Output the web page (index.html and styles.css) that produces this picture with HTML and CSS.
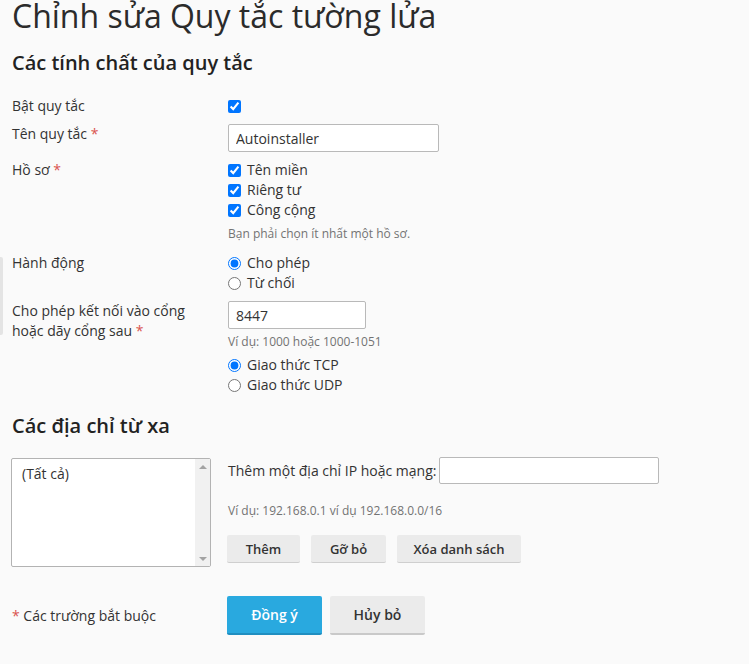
FILE: index.html
```html
<!DOCTYPE html>
<html lang="vi">
<head>
<meta charset="utf-8">
<title>Chỉnh sửa Quy tắc tường lửa</title>
<link rel="stylesheet" href="styles.css">
</head>
<body>
<div class="edge-strip"></div>
<div class="page">
  <h1 class="title">Chỉnh sửa Quy tắc tường lửa</h1>
  <h2 class="section-title first">Các tính chất của quy tắc</h2>

  <div class="row row-enable">
    <div class="label">Bật quy tắc</div>
    <div class="control"><label class="opt"><input type="checkbox" checked></label></div>
  </div>

  <div class="row row-name">
    <div class="label">Tên quy tắc <span class="req">*</span></div>
    <div class="control"><input class="text-input name-input" type="text" value="Autoinstaller"></div>
  </div>

  <div class="row row-profile">
    <div class="label">Hồ sơ <span class="req">*</span></div>
    <div class="control">
      <label class="opt"><input type="checkbox" checked><span>Tên miền</span></label>
      <label class="opt"><input type="checkbox" checked><span>Riêng tư</span></label>
      <label class="opt"><input type="checkbox" checked><span>Công cộng</span></label>
      <div class="hint hint-profile">Bạn phải chọn ít nhất một hồ sơ.</div>
    </div>
  </div>

  <div class="row row-action">
    <div class="label">Hành động</div>
    <div class="control">
      <label class="opt"><input type="radio" name="act" checked><span>Cho phép</span></label>
      <label class="opt"><input type="radio" name="act"><span>Từ chối</span></label>
    </div>
  </div>

  <div class="row row-port">
    <div class="label">Cho phép kết nối vào cổng<br>hoặc dãy cổng sau <span class="req">*</span></div>
    <div class="control">
      <input class="text-input port-input" type="text" value="8447">
      <div class="hint hint-port">Ví dụ: 1000 hoặc 1000-1051</div>
      <div class="proto">
        <label class="opt"><input type="radio" name="proto" checked><span>Giao thức TCP</span></label>
        <label class="opt"><input type="radio" name="proto"><span>Giao thức UDP</span></label>
      </div>
    </div>
  </div>

  <h2 class="section-title second">Các địa chỉ từ xa</h2>

  <div class="remote">
    <div class="listbox">
      <div class="list-items"><div class="list-item">(Tất cả)</div></div>
      <div class="scrollbar">
        <span class="arrow up"></span>
        <span class="arrow down"></span>
      </div>
    </div>
    <div class="remote-controls">
      <div class="ip-line">
        <span>Thêm một địa chỉ IP hoặc mạng:</span>
        <input class="text-input ip-input" type="text">
      </div>
      <div class="hint hint-ip">Ví dụ: 192.168.0.1 ví dụ 192.168.0.0/16</div>
      <div class="btn-row">
        <button class="btn btn-add">Thêm</button>
        <button class="btn btn-remove">Gỡ bỏ</button>
        <button class="btn btn-clear">Xóa danh sách</button>
      </div>
    </div>
  </div>

  <div class="footer">
    <div class="footer-note"><span class="req">*</span> Các trường bắt buộc</div>
    <div class="footer-buttons">
      <button class="btn-lg btn-primary">Đồng ý</button>
      <button class="btn-lg btn-cancel">Hủy bỏ</button>
    </div>
  </div>
</div>
</body>
</html>
```
FILE: styles.css
```css
html, body {
  margin: 0;
  padding: 0;
  background: #fafafa;
}
body {
  font-family: "Open Sans", "Noto Sans", sans-serif;
  font-size: 14px;
  line-height: 20px;
  color: #333;
  position: relative;
}
.edge-strip {
  position: absolute;
  left: 0;
  top: 257px;
  width: 3px;
  height: 78px;
  background: #e4e4e4;
  border-radius: 0 2px 2px 0;
}
.page {
  padding-left: 12px;
}
.title {
  margin: 0;
  font-size: 32px;
  line-height: 32px;
  font-weight: 400;
  color: #2b2b2b;
}
.section-title {
  margin: 0;
  font-size: 20px;
  line-height: 24px;
  font-weight: 600;
  color: #222;
}
.section-title.first {
  margin-top: 19px;
  margin-bottom: 21px;
}
.section-title.second {
  margin-top: 19px;
  margin-bottom: 20px;
}
.row {
  display: grid;
  grid-template-columns: 216px 1fr;
}
.row-enable { margin-bottom: 8px; }
.row-name { margin-bottom: 8px; }
.row-profile { margin-bottom: 11px; }
.row-action { margin-bottom: 8px; }
.control {
  display: flex;
  flex-direction: column;
  align-items: flex-start;
}
.req {
  color: #d9534f;
}
.opt {
  display: flex;
  align-items: center;
  height: 20px;
  gap: 6px;
}
.opt input {
  margin: 0;
  width: 13px;
  height: 13px;
}
.text-input {
  box-sizing: border-box;
  height: 28px;
  margin: 0;
  border: 1px solid #b9b9b9;
  border-radius: 2px;
  background: #fff;
  padding: 0 7px;
  font-family: "Open Sans", "Noto Sans", sans-serif;
  font-size: 14px;
  color: #333;
}
.name-input { width: 211px; }
.port-input { width: 138px; }
.hint {
  font-size: 12px;
  line-height: 16px;
  color: #737373;
}
.hint-profile { margin-top: 6px; }
.hint-port { margin-top: 5px; }
.proto { margin-top: 5px; }

.remote {
  display: flex;
  align-items: flex-start;
  margin-left: -1px;
}
.listbox {
  box-sizing: border-box;
  width: 200px;
  height: 109px;
  border: 1px solid #b3b3b3;
  border-radius: 2px;
  background: #fff;
  display: flex;
}
.list-items {
  flex: 1;
  padding: 5px 10px;
}
.list-item {
  line-height: 20px;
}
.scrollbar {
  width: 15px;
  background: #f1f1f1;
  display: flex;
  flex-direction: column;
  justify-content: space-between;
  align-items: center;
  padding: 6px 0 5px;
}
.arrow {
  width: 0;
  height: 0;
  border-left: 4px solid transparent;
  border-right: 4px solid transparent;
}
.arrow.up { border-bottom: 4px solid #a3a3a3; }
.arrow.down { border-top: 4px solid #a3a3a3; }

.remote-controls {
  margin-left: 17px;
  margin-top: -1px;
}
.ip-line {
  display: flex;
  align-items: center;
  gap: 3px;
}
.ip-input {
  width: 220px;
  height: 27px;
}
.hint-ip { margin-top: 19px; }
.btn-row {
  display: flex;
  gap: 11px;
  margin-top: 16px;
  margin-left: -1px;
}
.btn {
  box-sizing: border-box;
  height: 28px;
  border: 0;
  border-bottom: 1px solid #cfcfcf;
  border-radius: 2px;
  background: #ebebeb;
  font-family: "Open Sans", "Noto Sans", sans-serif;
  font-size: 13px;
  font-weight: 600;
  color: #333;
  padding: 0;
}
.btn-add { width: 73px; }
.btn-remove { width: 75px; }
.btn-clear { width: 124px; }

.footer {
  display: grid;
  grid-template-columns: 215px 1fr;
  align-items: center;
  margin-top: 29px;
}
.footer-buttons {
  display: flex;
  gap: 8px;
}
.btn-lg {
  box-sizing: border-box;
  width: 95px;
  height: 39px;
  border: 0;
  border-radius: 2px;
  font-family: "Open Sans", "Noto Sans", sans-serif;
  font-size: 14px;
  font-weight: 600;
  padding: 0;
}
.btn-primary {
  background: #29a9df;
  border-bottom: 2px solid #208ec0;
  color: #fff;
}
.btn-cancel {
  background: #ebebeb;
  border-bottom: 2px solid #c9c9c9;
  color: #333;
}
```
